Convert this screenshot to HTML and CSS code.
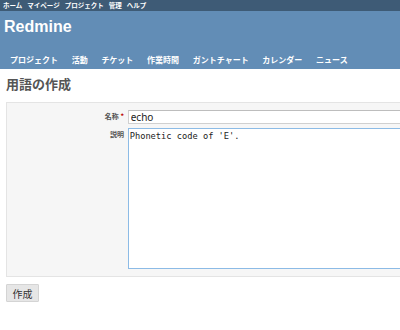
FILE: index.html
```html
<!DOCTYPE html>
<html lang="ja">
<head>
<meta charset="utf-8">
<title>用語の作成 - Redmine</title>
<link rel="stylesheet" href="styles.css">
</head>
<body>
<div class="top-menu">
  <a href="#">ホーム</a>
  <a href="#">マイページ</a>
  <a href="#">プロジェクト</a>
  <a href="#">管理</a>
  <a href="#">ヘルプ</a>
</div>
<div class="header">
  <h1 class="logo">Redmine</h1>
  <nav class="main-menu">
    <a href="#">プロジェクト</a>
    <a href="#">活動</a>
    <a href="#">チケット</a>
    <a href="#">作業時間</a>
    <a href="#">ガントチャート</a>
    <a href="#">カレンダー</a>
    <a href="#">ニュース</a>
  </nav>
</div>
<div class="content">
  <h2 class="title">用語の作成</h2>
  <form class="form">
    <div class="box">
      <div class="row">
        <label class="label">名称 <span class="req">*</span></label>
        <input class="field" type="text" value="echo">
      </div>
      <div class="row">
        <label class="label">説明</label>
        <textarea class="field area">Phonetic code of 'E'.</textarea>
      </div>
    </div>
    <button class="btn" type="button">作成</button>
  </form>
</div>
</body>
</html>
```

FILE: styles.css
```css
html, body {
  margin: 0;
  padding: 0;
  background: #fff;
  overflow: hidden;
}
body {
  width: 400px;
  height: 330px;
  font-family: "DejaVu Sans", "Noto Sans CJK JP", sans-serif;
  color: #333;
}
a { text-decoration: none; }

.top-menu {
  height: 11px;
  background: #3e5b76;
  display: flex;
  align-items: center;
  gap: 5px;
  padding-left: 3px;
  font-family: "Noto Sans CJK JP", sans-serif;
  font-size: 6.5px;
  font-weight: bold;
}
.top-menu a { color: #fff; line-height: 11px; }

.header {
  height: 58px;
  background: #628db6;
  display: flex;
  flex-direction: column;
  justify-content: space-between;
}
.logo {
  margin: 0;
  padding: 6px 0 0 4px;
  font-family: "Liberation Sans", sans-serif;
  font-size: 16px;
  font-weight: bold;
  color: #fff;
  line-height: 20px;
}
.main-menu {
  display: flex;
  gap: 13.7px;
  padding: 0 0 4px 10px;
  font-family: "Noto Sans CJK JP", sans-serif;
  font-size: 8px;
  font-weight: bold;
  line-height: 10px;
}
.main-menu a { color: #fff; }

.content {
  padding: 0 6px;
  width: 520px;
}
.title {
  margin: 0;
  padding: 7px 0 0 0;
  height: 25px;
  box-sizing: border-box;
  font-family: "Noto Sans CJK JP", sans-serif;
  font-size: 13px;
  font-weight: bold;
  color: #555;
  line-height: 16px;
}
.form { margin: 7.7px 0 0 0; }
.box {
  background: #f6f6f6;
  border: 1px solid #e4e4e4;
  padding: 7.3px 0 6.4px 0;
  display: flex;
  flex-direction: column;
  gap: 4px;
}
.row {
  display: flex;
  align-items: flex-start;
}
.label {
  width: 117px;
  flex: none;
  text-align: right;
  padding-top: 2px;
  font-family: "Noto Sans CJK JP", sans-serif;
  font-size: 7px;
  font-weight: bold;
  line-height: 8px;
  color: #555;
}
.req { color: #bb0000; }
.field {
  margin-left: 3.7px;
  width: 400px;
  box-sizing: border-box;
  height: 14.5px;
  border: 1px solid #d0d0d0;
  border-top-color: #bdbdbd;
  background: #fff;
  padding: 0 2px;
  font-family: "Noto Sans", sans-serif;
  font-size: 10px;
  color: #222;
}
.area {
  height: 141px;
  border: 1px solid #8cbbe6;
  resize: none;
  padding: 2px 1px;
  font-family: "DejaVu Sans Mono", monospace;
  font-size: 8.7px;
  line-height: 11px;
  outline: none;
}
.btn {
  margin-top: 7.6px;
  height: 18px;
  width: 33px;
  padding: 0;
  background: #e6e6e6;
  border: 1px solid #d4d4d4;
  border-radius: 1px;
  font-family: "Noto Sans CJK JP", sans-serif;
  font-size: 10px;
  color: #333;
}
```
